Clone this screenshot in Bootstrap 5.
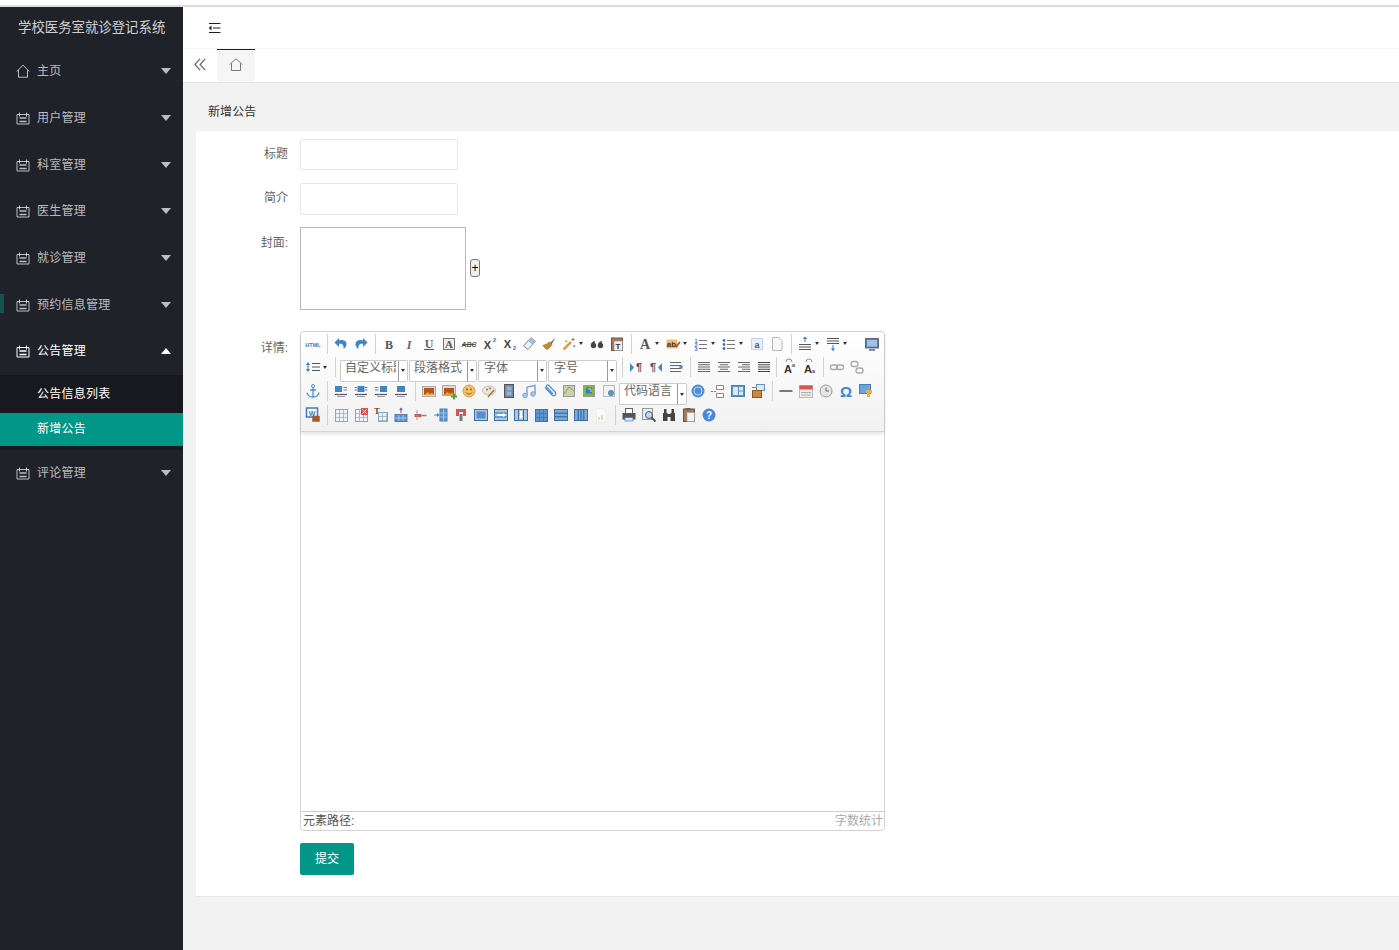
<!DOCTYPE html>
<html lang="zh-CN">
<head>
    <meta charset="UTF-8">
    <meta name="viewport" content="width=device-width, initial-scale=1.0">
    <title>新增公告</title>
    <link href="https://cdn.jsdelivr.net/npm/bootstrap@5.3.0/dist/css/bootstrap.min.css" rel="stylesheet">
    <style>
        html, body { height: 100%; overflow: hidden; }
        body {
            font-family: "Liberation Sans", "Noto Sans CJK SC", sans-serif;
            font-size: 12px;
            color: #666;
            background: #f2f2f2;
        }
        .top-strip { height: 7px; background: #fff; border-bottom: 2px solid #dcdce2; }
        .app-wrap { height: 943px; }

        /* sidebar */
        .side-bar { width: 183px; background: #20222a; }
        .side-logo { height: 41.15px; line-height: 41px; padding-left: 18px; font-size: 13.4px; color: rgba(255,255,255,.8); }
        .side-item { height: 46.67px; padding-left: 16px; padding-right: 12px; color: rgba(255,255,255,.7); letter-spacing: .25px; }
        .side-item.is-open { color: #fff; }
        .side-item svg { width: 14px; height: 14px; margin-right: 7px; }
        .side-mark { left: 0; top: 13px; width: 4px; height: 19px; background: #14524f; }
        .arrow-down, .arrow-up { width: 0; height: 0; border-left: 5px solid transparent; border-right: 5px solid transparent; }
        .arrow-down { border-top: 6px solid rgba(255,255,255,.7); }
        .arrow-up { border-bottom: 6px solid #fff; }
        .side-sub { height: 75px; padding-top: 4px; background: #18191e; }
        .side-sub-item { height: 34px; padding-left: 37px; padding-bottom: 3px; color: #fff; letter-spacing: .25px; }
        .side-sub-item.is-active { height: 33px; padding-bottom: 0; background: #009688; }

        /* header and tabs */
        .head-bar { height: 42px; background: #fff; border-bottom: 1px solid #f6f6f6; padding-left: 25px; }
        .tab-bar { height: 34px; background: #fff; border-bottom: 1px solid #e6e6e6; }
        .tab-prev { width: 34px; padding-bottom: 2px; }
        .tab-home { width: 38px; padding-bottom: 3px; background: #f6f6f6; border-top: 1px solid #20222a; }
        .crumb-title { height: 48px; padding: 20px 0 0 25px; color: #333; font-size: 12px; letter-spacing: .1px; }

        /* form */
        .form-panel { height: 766px; margin-left: 13px; background: #fff; border-bottom: 1px solid #e6e6e6; border-radius: 2px 0 0 0; padding-top: 8px; }
        .form-line { display: flex; }
        .form-line-intro { margin-top: 13px; }
        .form-line-cover { margin-top: 12px; }
        .form-line-detail { margin-top: 21px; }
        .form-label-col { width: 92px; margin-right: 12px; padding-top: 6px; text-align: right; color: #666; font-size: 12px; }
        .form-label-col.is-low { padding-top: 7px; }
        .text-field { width: 158px; height: 31px; border: 1px solid #e6e6e6; border-radius: 2px; background: #fff; display: block; }
        .text-field.is-tall { height: 32px; }
        .cover-box { width: 166px; height: 83px; border: 1px solid #b8b8b8; }
        .add-btn { width: 10px; height: 18px; margin: 32px 0 0 4px; padding: 0; line-height: 15px; font-size: 12px; color: #000; background: #efefef; border: 1px solid #767676; border-radius: 3px; }
        .submit-btn { width: 54px; height: 32px; padding: 0; margin-left: 104px; margin-top: 12px; background: #009688; color: #fff; font-size: 12px; border: 0; border-radius: 2px; }

        /* editor */
        .ed-box { width: 585px; height: 500px; border: 1px solid #d4d4d4; border-radius: 4px; background: #fff; }
        .ed-tools { height: 100px; padding-left: 2px; background: linear-gradient(#fff, #f1f1f1); border-bottom: 1px solid #d4d4d4; box-shadow: 0 2px 4px rgba(0,0,0,.12); border-radius: 4px 4px 0 0; }
        .ed-row { height: 23.67px; display: flex; align-items: center; }
        .ed-btn { width: 20px; height: 20px; flex: none; }
        .ed-btn svg { display: block; width: 20px; height: 20px; }
        .ed-arrow { width: 8px; height: 20px; flex: none; display: flex; align-items: center; }
        .ed-arrow::after { content: ""; border-left: 2.5px solid transparent; border-right: 2.5px solid transparent; border-top: 3px solid #333; }
        .ed-sep { width: 8px; height: 20px; flex: none; display: flex; justify-content: center; }
        .ed-sep::after { content: ""; width: 1px; background: #d2d2d2; }
        .ed-sep.is-thin { width: 5px; }
        .ed-gap { width: 11px; flex: none; }
        .ed-combo { flex: none; align-self: flex-start; width: 69px; height: 22px; margin-top: 4px; padding-right: 1px; display: flex; }
        .ed-combo.is-wide { width: 70px; }
        .ed-combo.is-wide .ed-combo-label { padding-left: 5px; }
        .ed-combo.is-first { margin-left: 1px; }
        .ed-combo-label { flex: 1; min-width: 0; padding-left: 4px; line-height: 15px; background: #fff; border: 1px solid #ccc; border-right-color: #999; border-radius: 2px 0 0 2px; }
        .ed-combo-text { display: block; width: 51px; white-space: nowrap; overflow: hidden; color: #666; font-size: 12px; }
        .ed-combo-drop { width: 9px; display: flex; align-items: center; justify-content: center; background: #fff; border: 1px solid #ccc; border-left: 0; border-radius: 0 2px 2px 0; }
        .ed-combo-drop::after { content: ""; border-left: 2.5px solid transparent; border-right: 2.5px solid transparent; border-top: 3px solid #333; }
        .ed-body { height: 379px; }
        .ed-status { height: 19px; line-height: 18px; padding: 0 1px 0 2px; border-top: 1px solid #ccc; font-size: 12px; color: #555; }
        .ed-count { color: #aaa; }
    </style>
</head>
<body>
    <div class="top-strip"></div>
    <div class="app-wrap d-flex">
        <aside class="side-bar flex-shrink-0">
            <div class="side-logo">学校医务室就诊登记系统</div>
            <div class="side-item d-flex align-items-center">
                <svg viewBox="0 0 14 14"><path d="M.6 7.500 7 1.200l6.400 6.300M2.500 6.200v7h9v-7" fill="none" stroke="currentColor"/></svg>
                <span class="flex-grow-1">主页</span><i class="arrow-down"></i>
            </div>
            <div class="side-item d-flex align-items-center">
                <svg viewBox="0 0 14 14"><use href="#nav-cal"/></svg>
                <span class="flex-grow-1">用户管理</span><i class="arrow-down"></i>
            </div>
            <div class="side-item d-flex align-items-center">
                <svg viewBox="0 0 14 14"><use href="#nav-cal"/></svg>
                <span class="flex-grow-1">科室管理</span><i class="arrow-down"></i>
            </div>
            <div class="side-item d-flex align-items-center">
                <svg viewBox="0 0 14 14"><use href="#nav-cal"/></svg>
                <span class="flex-grow-1">医生管理</span><i class="arrow-down"></i>
            </div>
            <div class="side-item d-flex align-items-center">
                <svg viewBox="0 0 14 14"><use href="#nav-cal"/></svg>
                <span class="flex-grow-1">就诊管理</span><i class="arrow-down"></i>
            </div>
            <div class="side-item d-flex align-items-center position-relative">
                <i class="side-mark position-absolute"></i>
                <svg viewBox="0 0 14 14"><use href="#nav-cal"/></svg>
                <span class="flex-grow-1">预约信息管理</span><i class="arrow-down"></i>
            </div>
            <div class="side-item is-open d-flex align-items-center">
                <svg viewBox="0 0 14 14"><use href="#nav-cal"/></svg>
                <span class="flex-grow-1">公告管理</span><i class="arrow-up"></i>
            </div>
            <div class="side-sub">
                <div class="side-sub-item d-flex align-items-center">公告信息列表</div>
                <div class="side-sub-item is-active d-flex align-items-center">新增公告</div>
            </div>
            <div class="side-item d-flex align-items-center">
                <svg viewBox="0 0 14 14"><use href="#nav-cal"/></svg>
                <span class="flex-grow-1">评论管理</span><i class="arrow-down"></i>
            </div>
        </aside>

        <main class="flex-grow-1 d-flex flex-column">
            <div class="head-bar d-flex align-items-center">
                <svg width="13" height="12" viewBox="0 0 13 12"><path d="M1 1.500h11.500M5 6h7.500M1 10.500h11.500" stroke="#222" stroke-width="1.200" fill="none"/><path d="M3.500 3.500 .8 6l2.700 2.500z" fill="#222"/></svg>
            </div>
            <div class="tab-bar d-flex">
                <div class="tab-prev d-flex align-items-center justify-content-center">
                    <svg width="12" height="13" viewBox="0 0 12 13"><path d="M6 .8.900 6.500 6 12.200M11.200.8 6.100 6.500l5.100 5.700" fill="none" stroke="#666" stroke-width="1.200"/></svg>
                </div>
                <div class="tab-home d-flex align-items-center justify-content-center">
                    <svg width="14" height="13" viewBox="0 0 14 13"><path d="M.6 6.500 7 .8l6.400 5.700M2.500 5.500v7h9v-7" fill="none" stroke="#778"/></svg>
                </div>
            </div>
            <div class="crumb-title">新增公告</div>
            <form class="form-panel" onsubmit="return false">
                <div class="form-line">
                    <label class="form-label-col">标题</label>
                    <input class="text-field" type="text">
                </div>
                <div class="form-line form-line-intro">
                    <label class="form-label-col">简介</label>
                    <input class="text-field is-tall" type="text">
                </div>
                <div class="form-line form-line-cover">
                    <label class="form-label-col is-low">封面:</label>
                    <div class="cover-box"></div>
                    <button class="add-btn" type="button">+</button>
                </div>
                <div class="form-line form-line-detail">
                    <label class="form-label-col pt-2">详情:</label>
                    <div class="ed-box d-flex flex-column">
                        <div class="ed-tools" id="edTools"></div>
                        <div class="ed-body flex-grow-1"></div>
                        <div class="ed-status d-flex justify-content-between">
                            <span>元素路径:</span><span class="ed-count">字数统计</span>
                        </div>
                    </div>
                </div>
                <button class="submit-btn d-block" type="submit">提交</button>
            </form>
        </main>
    </div>

    <svg width="0" height="0" class="position-absolute">
        <symbol id="nav-cal" viewBox="0 0 14 14">
            <path d="M1 3.500h12v9.500H1zM3.500 1.500v4M10.500 1.500v4" fill="none" stroke="currentColor"/>
            <path d="M3.500 7h7M3.500 10.500h7" fill="none" stroke="currentColor" stroke-width="1.400"/>
        </symbol>
    </svg>

    <script src="https://cdn.jsdelivr.net/npm/bootstrap@5.3.0/dist/js/bootstrap.bundle.min.js"></script>
    <script>
        // toolbar icons, drawn on a 20x20 box
        const serif = 'font-family="Liberation Serif"';
        const sans = 'font-family="Liberation Sans"';
        const lines = (x, y, w, n, gap, c) => {
            let d = '';
            for (let i = 0; i < n; i++) d += 'M' + x + ' ' + (y + i * gap) + 'h' + w;
            return '<path d="' + d + '" stroke="' + (c || '#555') + '" fill="none"/>';
        };
        // alternating long and short lines for the align buttons
        const align = (off, c) => {
            let d = '';
            for (let i = 0; i < 5; i++) d += 'M' + (i % 2 ? 4 + off : 4) + ' ' + (5.5 + i * 2.25) + 'h' + (i % 2 ? 12 - (off ? 4 : 0) : 12);
            return '<path d="' + d + '" stroke="' + (c || '#666') + '" fill="none"/>';
        };
        const grid = (x, y, w, h, c, f) =>
            '<rect x="' + x + '.5" y="' + y + '.5" width="' + w + '" height="' + h + '" fill="' + (f || '#dce8f4') + '" stroke="' + (c || '#6d8fb8') + '"/>' +
            '<path d="M' + x + ' ' + (y + 4) + '.5h' + w + 'M' + x + ' ' + (y + 8) + '.5h' + w + 'M' + (x + 4) + '.5 ' + y + 'v' + h + 'M' + (x + 8) + '.5 ' + y + 'v' + h + '" stroke="' + (c || '#6d8fb8') + '" stroke-width=".7"/>';
        const floatImg = pos => {
            const x = { l: 4, m: 6.500, r: 9, c: 6 }[pos];
            let side = '';
            if (pos === 'l') side = lines(12.500, 6.500, 3.500, 2, 2.500, '#778');
            if (pos === 'r') side = lines(4, 6.500, 3.500, 2, 2.500, '#778');
            if (pos === 'm') side = lines(3.500, 6.500, 2.500, 2, 2.500, '#778') + lines(14, 6.500, 2.500, 2, 2.500, '#778');
            return '<rect x="' + x + '" y="5" width="' + (pos === 'c' ? 8 : 7) + '" height="6" fill="#3f86c8"/>' + side + '<path d="M4 13.500h12" stroke="#556" stroke-width="1.200"/><path d="M6 15.500h8" stroke="#99a"/>';
        };
        const icons = {
            html: '<text x="10" y="12.500" font-size="5.500" font-weight="700" text-anchor="middle" fill="#3d78b5" ' + sans + '>HTML</text>',
            undo: '<path d="M8 4 3.500 8.500 8 13v-3c3-.6 5 .5 4.500 5 2.500-1.500 3.500-4 2.800-6.300C14.500 6.300 11.500 5.500 8 6.500z" fill="#3b87c9"/>',
            redo: '<path d="M12 4l4.500 4.500L12 13v-3c-3-.6-5 .5-4.500 5C5 13.500 4 11 4.700 8.700 5.500 6.300 8.500 5.500 12 6.500z" fill="#3b87c9"/>',
            bold: '<text x="10" y="14.500" font-size="12" font-weight="700" text-anchor="middle" fill="#555" ' + serif + '>B</text>',
            italic: '<text x="10" y="14.500" font-size="12" font-weight="700" font-style="italic" text-anchor="middle" fill="#666" ' + serif + '>I</text>',
            under: '<text x="10" y="13.500" font-size="12" font-weight="700" text-anchor="middle" fill="#666" ' + serif + '>U</text><path d="M5 15.500h10" stroke="#555"/>',
            boxa: '<rect x="4.500" y="4.500" width="11" height="11" fill="#eee" stroke="#777"/><text x="10" y="14" font-size="11" font-weight="700" text-anchor="middle" fill="#555" ' + serif + '>A</text>',
            strike: '<text x="10" y="13" font-size="7" font-weight="700" font-style="italic" text-anchor="middle" fill="#555" ' + sans + '>ABC</text><path d="M3 10.500h14" stroke="#444" stroke-width=".8"/>',
            sup: '<text x="8.500" y="14.500" font-size="11" font-weight="700" text-anchor="middle" fill="#444" ' + sans + '>X</text><text x="15.500" y="8" font-size="6" font-weight="700" text-anchor="middle" fill="#3b78c9" ' + sans + '>2</text>',
            sub: '<text x="8.500" y="14" font-size="11" font-weight="700" text-anchor="middle" fill="#444" ' + sans + '>X</text><text x="15.500" y="16" font-size="6" font-weight="700" text-anchor="middle" fill="#3b78c9" ' + sans + '>2</text>',
            eraser: '<path d="M12 3.500 16.500 7.500 9 15.500 4.500 12z" fill="#eef0f4" stroke="#889"/><path d="M12 3.500 16.500 7.500 13.500 10.800 9 7z" fill="#9cc0e0"/>',
            brush: '<path d="M16.500 3.500 11 9l1.500 1.500z" fill="#8a5a2b"/><path d="M10.500 7.500C8.500 9.500 6 10.500 3.500 11c1 2.500 3 4.200 5 5 2-1.500 3.500-3.500 5-5.500z" fill="#b98a3f"/>',
            wand: '<path d="M4.500 15.500 12 8" stroke="#e0a040" stroke-width="2.500"/><path d="M14 4v3M12.500 5.500h3" stroke="#d9534f"/><path d="M7 6v2.500M6 7.200h2.500" stroke="#e0a040"/><path d="M15 11v2.500M14 12.200h2.500" stroke="#5aa0d8"/>',
            quote: '<g fill="#444"><circle cx="6.500" cy="11.500" r="2.700"/><circle cx="13.500" cy="11.500" r="2.700"/><path d="M3.800 11.500C3.800 9 5.500 7.200 8 7v1.500c-1 .3-1.500 1-1.500 2zM10.800 11.500c0-2.500 1.700-4.300 4.200-4.500v1.500c-1 .3-1.500 1-1.500 2z"/></g>',
            pastetxt: '<rect x="4.500" y="4" width="11" height="12.500" fill="#a9785a" stroke="#75503b"/><rect x="7" y="7" width="8.500" height="9.500" fill="#eee" stroke="#888" stroke-width=".6"/><text x="11" y="15" font-size="8" font-weight="700" text-anchor="middle" fill="#333" ' + sans + '>T</text>',
            color: '<text x="10" y="14.500" font-size="14" text-anchor="middle" fill="#555" font-weight="700" ' + serif + '>A</text>',
            back: '<rect x="3.500" y="5.500" width="11" height="9" rx="1" fill="#efbe6a"/><text x="8.500" y="13" font-size="8" font-weight="700" text-anchor="middle" fill="#333" ' + sans + '>ab</text><path d="M13 13l4-5" stroke="#c0392b" stroke-width="1.500"/>',
            ol: '<text x="5" y="8.500" font-size="5.500" font-weight="700" fill="#3b78c9" text-anchor="middle" ' + sans + '>1</text><text x="5" y="12.500" font-size="5.500" font-weight="700" fill="#3b78c9" text-anchor="middle" ' + sans + '>2</text><text x="5" y="16.500" font-size="5.500" font-weight="700" fill="#3b78c9" text-anchor="middle" ' + sans + '>3</text>' + lines(8, 6.500, 8, 3, 4, '#777'),
            ul: '<circle cx="5" cy="6.500" r="1.400" fill="#3b78c9"/><circle cx="5" cy="10.500" r="1.400" fill="#3b78c9"/><circle cx="5" cy="14.500" r="1.400" fill="#3b78c9"/>' + lines(8, 6.500, 8, 3, 4, '#777'),
            seltext: '<rect x="4.500" y="4.500" width="11" height="11" fill="#e8f1fa" stroke="#8ab3dc" stroke-dasharray="1 1"/><text x="10" y="13.500" font-size="9" font-weight="700" text-anchor="middle" fill="#555" ' + sans + '>a</text>',
            page: '<path d="M5.500 3.500h6.500l3 3v10h-9.500z" fill="#f6f6f6" stroke="#bbb"/>',
            rowtop: '<path d="M10 3v5" stroke="#3b78c9"/><path d="M7.800 5 10 2.500 12.200 5z" fill="#3b78c9"/>' + lines(4, 10.500, 12, 3, 2.500),
            rowbot: lines(4, 4.500, 12, 3, 2.500) + '<path d="M10 11v5" stroke="#3b78c9"/><path d="M7.800 14.500 10 17l2.200-2.500z" fill="#3b78c9"/>',
            full: '<rect x="3.500" y="4.500" width="13" height="9.500" fill="#4f83bd" stroke="#667"/><rect x="5" y="6" width="10" height="6.500" fill="#9cc3e8"/><path d="M7 16h6" stroke="#667" stroke-width="1.500"/>',
            lineh: '<path d="M5 7v6" stroke="#3b78c9"/><path d="M3 8 5 5l2 3zM3 12l2 3 2-3z" fill="#3b78c9"/>' + lines(9, 6.500, 8, 3, 3.500),
            ltr: '<path d="M4 6l4 4.500L4 15z" fill="#3b87d9"/><text x="13" y="14" font-size="11" font-weight="700" text-anchor="middle" fill="#555" ' + sans + '>¶</text>',
            rtl: '<path d="M16 6l-4 4.500 4 4.500z" fill="#3b87d9"/><text x="7" y="14" font-size="11" font-weight="700" text-anchor="middle" fill="#555" ' + sans + '>¶</text>',
            indent: lines(4, 5.500, 11, 4, 3, '#666') + '<path d="M16.500 8 12.500 10 16.500 12z" fill="#3b87d9"/>',
            left: align(0) ,
            center: align(2),
            right: align(4),
            just: align(0, '#444'),
            upper: '<text x="9" y="15.500" font-size="11" font-weight="700" text-anchor="middle" fill="#333" ' + sans + '>A</text><text x="14.500" y="10" font-size="6" fill="#333" text-anchor="middle" ' + sans + '>a</text><path d="M7 5a3 3 0 0 1 6 0" stroke="#666" fill="none" stroke-width=".7"/>',
            lower: '<text x="9" y="15.500" font-size="11" font-weight="700" text-anchor="middle" fill="#333" ' + sans + '>A</text><text x="14.500" y="15.500" font-size="6" fill="#333" text-anchor="middle" ' + sans + '>a</text><path d="M7 5a3 3 0 0 1 6 0" stroke="#666" fill="none" stroke-width=".7"/>',
            link: '<rect x="3.500" y="8" width="7" height="4.500" rx="2.200" fill="none" stroke="#a8a8a8" stroke-width="1.300"/><rect x="9.500" y="8" width="7" height="4.500" rx="2.200" fill="none" stroke="#a8a8a8" stroke-width="1.300"/>',
            unlink: '<rect x="4" y="4.500" width="7" height="5" rx="2.300" fill="none" stroke="#a8a8a8" stroke-width="1.300"/><rect x="9" y="11" width="7" height="5" rx="2.300" fill="none" stroke="#a8a8a8" stroke-width="1.300"/>',
            anchor: '<circle cx="10" cy="5" r="1.500" fill="none" stroke="#4f8fc9"/><path d="M10 6.500V16M7 9h6M4 11.500C4.500 14.500 7 16 10 16s5.500-1.500 6-4.500" fill="none" stroke="#4f8fc9" stroke-width="1.300"/>',
            imgn: floatImg('l'), imgl: floatImg('m'), imgr: floatImg('r'), imgc: floatImg('c'),
            image: '<rect x="3.500" y="5.500" width="13" height="10" fill="#ddd" stroke="#aaa"/><rect x="5" y="7" width="10" height="7" fill="#b4551a"/><path d="M5 14l3.500-3 2.500 2 2-1.500 2 2.500z" fill="#f0a030"/>',
            multi: '<rect x="3.500" y="4.500" width="13" height="10" fill="#ddd" stroke="#aaa"/><rect x="5" y="7" width="10" height="7" fill="#b4551a"/><path d="M5 14l3.500-3 2.500 2 2-1.500 2 2.500z" fill="#f0a030"/><path d="M15 12.500v6M12 15.500h6" stroke="#4aa84a" stroke-width="2"/>',
            emo: '<circle cx="10" cy="10" r="6" fill="#f3c168" stroke="#d9a04a"/><circle cx="8" cy="8.500" r=".9" fill="#8a5a2b"/><circle cx="12" cy="8.500" r=".9" fill="#8a5a2b"/><path d="M7 11.500c1.500 2 4.500 2 6 0" stroke="#8a5a2b" fill="none"/>',
            scrawl: '<ellipse cx="10" cy="9.500" rx="6.500" ry="4.500" fill="#ece6d6" stroke="#c8bfa8"/><circle cx="8" cy="8.500" r="1" fill="#d9534f"/><circle cx="11" cy="7.500" r="1" fill="#4f8fc9"/><path d="M9 16l6-7" stroke="#a87c3a" stroke-width="1.600"/>',
            video: '<rect x="5.500" y="3.500" width="9" height="13" fill="#6f86ad" stroke="#555"/><rect x="7.500" y="5.500" width="5" height="4" fill="#9db2d2"/><rect x="7.500" y="10.500" width="5" height="4" fill="#9db2d2"/>',
            music: '<path d="M8 14.500V6l8-1.500V13" fill="none" stroke="#7ea8d8" stroke-width="1.500"/><circle cx="6" cy="14.500" r="2.300" fill="#a8c6e8" stroke="#7ea8d8"/><circle cx="14" cy="13" r="2.300" fill="#a8c6e8" stroke="#7ea8d8"/>',
            attach: '<path d="M6 6.500l7.500 8a2.200 2.200 0 0 0 3-3L9.500 4a1.500 1.500 0 0 0-2 2l6.500 7" fill="none" stroke="#4f8fd9" stroke-width="1.300"/>',
            map: '<rect x="4.500" y="4.500" width="11" height="11" fill="#c3d5a8" stroke="#999"/><path d="M5 13l5-7 5 4" stroke="#c97b63" fill="none"/>',
            gmap: '<rect x="4.500" y="4.500" width="11" height="11" fill="#7fb840" stroke="#999"/><rect x="7" y="6.500" width="6" height="6" fill="#2a7fd0"/><path d="M9 8h3v3" stroke="#ffd24a" fill="none"/>',
            frame: '<rect x="4.500" y="4.500" width="11" height="11" fill="#f2f2f2" stroke="#bbb"/><circle cx="12" cy="12" r="3" fill="#4f8fc9"/><path d="M10 12h4" stroke="#7fb840"/>',
            app: '<circle cx="10" cy="10" r="6.500" fill="#4f8fd9"/><circle cx="10" cy="10" r="4" fill="none" stroke="#bcd9f5"/>',
            pbreak: '<path d="M8.500 4.500h7v4h-7zM8.500 12.500h7v4h-7z" fill="#fff" stroke="#888"/><path d="M3 10.500h6" stroke="#3b87d9" stroke-dasharray="2 1"/>',
            tpl: '<rect x="3.500" y="4.500" width="13" height="11" fill="#5b94cf" stroke="#4a7fb5"/><rect x="5" y="6" width="5" height="8" fill="#d8e8f7"/><rect x="11" y="6" width="4" height="3.500" fill="#d8e8f7"/><rect x="11" y="10.500" width="4" height="3.500" fill="#d8e8f7"/>',
            bgimg: '<rect x="8.500" y="3.500" width="8" height="6" fill="#dce8f4" stroke="#6d8fb8"/><rect x="4.500" y="9.500" width="9" height="7" fill="#c98a3d" stroke="#8a5a2b"/><path d="M4 6.500h4" stroke="#3b87d9"/>',
            hr: '<path d="M3.500 10h13" stroke="#777" stroke-width="2"/>',
            date: '<rect x="3.500" y="4.500" width="13" height="12" fill="#eee" stroke="#bbb"/><rect x="3.500" y="4.500" width="13" height="4" fill="#d9534f"/>' + lines(5, 11.500, 10, 2, 2.500, '#aaa'),
            time: '<circle cx="10" cy="10" r="6" fill="#e6e6e6" stroke="#999"/><path d="M10 6.500V10h3" stroke="#666" fill="none"/>',
            omega: '<text x="10" y="15.500" font-size="15" font-weight="700" text-anchor="middle" fill="#3b87d9" ' + sans + '>Ω</text>',
            puzzle: '<rect x="3.500" y="3.500" width="11" height="9" fill="#6aa6de" stroke="#4a7fb5"/><path d="M10 9h6v3h-2v4h-3v-4h-1z" fill="#e8b04a"/>',
            word: '<rect x="3.500" y="3" width="11" height="9" fill="#fff" stroke="#3b78c9" stroke-width="1.500"/><text x="9" y="10.500" font-size="7" font-weight="700" text-anchor="middle" fill="#3b78c9" ' + sans + '>W</text><rect x="9.500" y="11" width="7" height="5.500" fill="#b4551a" stroke="#777" stroke-width=".6"/>',
            tbl: grid(4, 4, 12, 12, '#8aa6c6', '#eef3f9'),
            tbldel: grid(4, 4, 12, 12, '#8aa6c6', '#eef3f9') + '<rect x="10" y="3" width="7" height="7" fill="#d9534f"/><path d="M11.500 4.500l4 4m0-4-4 4" stroke="#fff"/>',
            tblcap: '<text x="6" y="9" font-size="8" font-weight="700" text-anchor="middle" fill="#444" ' + serif + '>T</text>' + grid(7, 7, 9, 9, '#8aa6c6', '#eef3f9'),
            rowins: '<rect x="4" y="9.500" width="12" height="7" fill="#5b94cf" stroke="#4a7fb5"/><path d="M4 13h12M8 10v6M12 10v6" stroke="#cfe0f2" stroke-width=".6"/><path d="M10 3v5" stroke="#c0392b"/><path d="M8 5l2-2.500L12 5z" fill="#4a7fb5"/>',
            rowdel: '<path d="M3.500 9h7v3h-7z" fill="#d9534f"/><path d="M10.500 10.500h5" stroke="#888" stroke-width="1.500"/><path d="M6 5v10" stroke="#999"/>',
            colins: '<rect x="9" y="4" width="7" height="12" fill="#5b94cf" stroke="#4a7fb5"/><path d="M9 8h7M9 12h7M12.500 4v12" stroke="#cfe0f2" stroke-width=".6"/><path d="M3 10h5" stroke="#4a7fb5"/><path d="M6 8l2.500 2L6 12z" fill="#4a7fb5"/>',
            coldel: '<path d="M5 4h3v7H5zM12 4h3v7h-3z" fill="#d9534f"/><path d="M8.500 9h3v7h-3z" fill="#777"/><path d="M5 4h10v3H5z" fill="#d9534f"/>',
            merge: '<rect x="3.500" y="4.500" width="13" height="11" fill="#a8c8e8" stroke="#3f70a8"/><rect x="5.500" y="6.500" width="9" height="7" fill="#5b8cc8"/>',
            mergeR: '<rect x="3.500" y="4.500" width="13" height="11" fill="#a8c8e8" stroke="#3f70a8"/><path d="M3.500 8h13M3.500 12h13" stroke="#3f70a8"/><path d="M6 10h6" stroke="#fff" stroke-width="2"/><path d="M12 8l3 2-3 2z" fill="#fff"/>',
            mergeD: '<rect x="3.500" y="4.500" width="13" height="11" fill="#a8c8e8" stroke="#3f70a8"/><path d="M7.500 4.500v11M12.500 4.500v11" stroke="#3f70a8"/><path d="M10 6v5" stroke="#fff" stroke-width="2"/><path d="M8 11l2 3 2-3z" fill="#fff"/>',
            split: grid(4, 4, 12, 12, '#3f70a8', '#5b94cf'),
            splitR: '<rect x="3.500" y="4.500" width="13" height="11" fill="#7aa8d8" stroke="#3f70a8"/><path d="M3.500 8.200h13M3.500 11.800h13" stroke="#2f5f98"/>',
            splitC: '<rect x="3.500" y="4.500" width="13" height="11" fill="#7aa8d8" stroke="#3f70a8"/><path d="M7.200 4.500v11M10 4.500v11M12.800 4.500v11" stroke="#2f5f98"/>',
            chart: '<path d="M5.500 3.500h6.500l3 3v10h-9.500z" fill="#fafafa" stroke="#eee"/><path d="M8 15v-3M11 15v-5" stroke="#e8dfb0" stroke-width="2"/>',
            print: '<rect x="6.500" y="3.500" width="7" height="5" fill="#fff" stroke="#666"/><rect x="3.500" y="8" width="13" height="6.500" fill="#555"/><rect x="6" y="12.500" width="8" height="3.500" fill="#d8e8f7" stroke="#3b78c9" stroke-width=".7"/>',
            preview: '<rect x="3.500" y="3.500" width="10" height="11" fill="#e8eef5" stroke="#999"/><circle cx="10" cy="10" r="3.500" fill="#bcd9f5" stroke="#555"/><path d="M12.500 12.500l4 4" stroke="#555" stroke-width="2"/>',
            search: '<path d="M4 8h4.500v8H4zM11.500 8H16v8h-4.500z" fill="#444"/><path d="M5 4h2.500v4H5zM12.500 4H15v4h-2.500zM8 9h4v3H8z" fill="#444"/>',
            paste: '<rect x="4.500" y="4" width="11" height="12.500" fill="#a9785a" stroke="#75503b"/><rect x="8" y="7.500" width="7.500" height="9" fill="#f2f2f2" stroke="#999" stroke-width=".6"/><rect x="6.500" y="3" width="5" height="2.500" fill="#666"/>',
            help: '<circle cx="10" cy="10" r="6.500" fill="#4a86dc"/><text x="10" y="13.500" font-size="10" font-weight="700" text-anchor="middle" fill="#fff" ' + sans + '>?</text>'
        };

        // | separator, ¦ thin separator, > drop arrow, _ spacer, [x combo, [[x wider combo, [!x first combo
        const rows = [
            ['html','|','undo','redo','|','bold','italic','under','boxa','strike','sup','sub','eraser','brush','wand','>','quote','pastetxt','|','color','>','back','>','ol','>','ul','>','seltext','page','|','rowtop','>','rowbot','>','_','full'],
            ['lineh','>','|','[!自定义标题','[段落格式','[[字体','[[字号','|','ltr','rtl','indent','|','left','center','right','just','¦','upper','lower','|','link','unlink'],
            ['anchor','|','imgn','imgl','imgr','imgc','|','image','multi','emo','scrawl','video','music','attach','map','gmap','frame','[代码语言','app','pbreak','tpl','bgimg','|','hr','date','time','omega','puzzle'],
            ['word','|','tbl','tbldel','tblcap','rowins','rowdel','colins','coldel','merge','mergeR','mergeD','split','splitR','splitC','chart','|','print','preview','search','paste','help']
        ];

        document.getElementById('edTools').innerHTML = rows.map(row => {
            const cells = row.map(name => {
                if (name === '|') return '<i class="ed-sep"></i>';
                if (name === '¦') return '<i class="ed-sep is-thin"></i>';
                if (name === '>') return '<i class="ed-arrow"></i>';
                if (name === '_') return '<i class="ed-gap"></i>';
                if (name[0] === '[') {
                    const cls = name[1] === '[' ? ' is-wide' : name[1] === '!' ? ' is-first' : '';
                    return '<div class="ed-combo' + cls + '"><div class="ed-combo-label"><span class="ed-combo-text">' + name.replace(/[\[!]/g, '') + '</span></div><div class="ed-combo-drop"></div></div>';
                }
                return '<div class="ed-btn"><svg viewBox="0 0 20 20">' + icons[name] + '</svg></div>';
            });
            return '<div class="ed-row">' + cells.join('') + '</div>';
        }).join('');
    </script>
</body>
</html>
